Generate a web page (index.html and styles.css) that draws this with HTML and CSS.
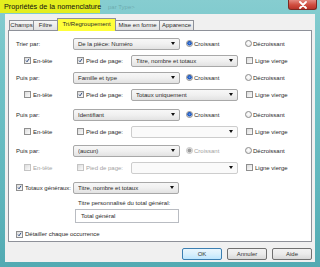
FILE: index.html
```html
<!DOCTYPE html>
<html lang="fr">
<head>
    <meta charset="UTF-8">
    <title>Propriétés de la nomenclature</title>
    <link rel="stylesheet" href="styles.css">
</head>
<body>
    <div class="window">
        <div class="titlebar">
            <span class="title">Propriétés de la nomenclature</span>
            <span class="ghost">par Type&gt;</span>
            <span class="close">
                <svg viewBox="0 0 10 8" width="10" height="8"><path d="M2 1l6 6M8 1l-6 6" stroke="#fff" stroke-width="1.8" stroke-linecap="round"/></svg>
            </span>
        </div>
        <div class="client">
            <div class="tabs">
                <span class="tab tab-champs">Champs</span>
                <span class="tab tab-filtre">Filtre</span>
                <span class="tab tab-tri active">Tri/Regroupement</span>
                <span class="tab tab-mise">Mise en forme</span>
                <span class="tab tab-app">Apparence</span>
            </div>
            <div class="panel">
                <div class="group">
                    <div class="row">
                        <span class="label">Trier par:</span>
                        <span class="select"><span class="value">De la pièce: Numéro</span><span class="arrow"></span></span>
                        <span class="radio-item first"><span class="radio on"></span>Croissant</span>
                        <span class="radio-item"><span class="radio"></span>Décroissant</span>
                    </div>
                    <div class="row sub">
                        <span class="check-item head"><span class="check on"><svg viewBox="0 0 7 7"><path d="M1.4 3.6l1.5 1.7 2.8-4.2"/></svg></span>En-tête</span>
                        <span class="check-item foot"><span class="check on"><svg viewBox="0 0 7 7"><path d="M1.4 3.6l1.5 1.7 2.8-4.2"/></svg></span>Pied de page:</span>
                        <span class="select wide"><span class="value">Titre, nombre et totaux</span><span class="arrow"></span></span>
                        <span class="check-item blank"><span class="check"></span>Ligne vierge</span>
                    </div>
                </div>
                <div class="group">
                    <div class="row">
                        <span class="label">Puis par:</span>
                        <span class="select"><span class="value">Famille et type</span><span class="arrow"></span></span>
                        <span class="radio-item first"><span class="radio on"></span>Croissant</span>
                        <span class="radio-item"><span class="radio"></span>Décroissant</span>
                    </div>
                    <div class="row sub">
                        <span class="check-item head"><span class="check"></span>En-tête</span>
                        <span class="check-item foot"><span class="check on"><svg viewBox="0 0 7 7"><path d="M1.4 3.6l1.5 1.7 2.8-4.2"/></svg></span>Pied de page:</span>
                        <span class="select wide"><span class="value">Totaux uniquement</span><span class="arrow"></span></span>
                        <span class="check-item blank"><span class="check"></span>Ligne vierge</span>
                    </div>
                </div>
                <div class="group g3">
                    <div class="row">
                        <span class="label">Puis par:</span>
                        <span class="select"><span class="value">Identifiant</span><span class="arrow"></span></span>
                        <span class="radio-item first"><span class="radio on"></span>Croissant</span>
                        <span class="radio-item"><span class="radio"></span>Décroissant</span>
                    </div>
                    <div class="row sub">
                        <span class="check-item head"><span class="check"></span>En-tête</span>
                        <span class="check-item foot"><span class="check"></span>Pied de page:</span>
                        <span class="select wide empty"><span class="value"></span><span class="arrow"></span></span>
                        <span class="check-item blank"><span class="check"></span>Ligne vierge</span>
                    </div>
                </div>
                <div class="group g4">
                    <div class="row">
                        <span class="label">Puis par:</span>
                        <span class="select"><span class="value">(aucun)</span><span class="arrow"></span></span>
                        <span class="radio-item first disabled"><span class="radio on"></span>Croissant</span>
                        <span class="radio-item"><span class="radio"></span>Décroissant</span>
                    </div>
                    <div class="row sub">
                        <span class="check-item head disabled"><span class="check"></span>En-tête</span>
                        <span class="check-item foot disabled"><span class="check"></span>Pied de page:</span>
                        <span class="select wide empty"><span class="value"></span><span class="arrow"></span></span>
                        <span class="check-item blank"><span class="check"></span>Ligne vierge</span>
                    </div>
                </div>
                <div class="row totals">
                    <span class="check-item total"><span class="check on"><svg viewBox="0 0 7 7"><path d="M1.4 3.6l1.5 1.7 2.8-4.2"/></svg></span>Totaux généraux:</span>
                    <span class="select short"><span class="value">Titre, nombre et totaux</span><span class="arrow"></span></span>
                </div>
                <div class="custom-label">Titre personnalisé du total général:</div>
                <div class="text-input">Total général</div>
                <div class="row detail">
                    <span class="check-item"><span class="check on"><svg viewBox="0 0 7 7"><path d="M1.4 3.6l1.5 1.7 2.8-4.2"/></svg></span>Détailler chaque occurrence</span>
                </div>
            </div>
            <div class="buttons">
                <span class="btn default">OK</span>
                <span class="btn">Annuler</span>
                <span class="btn">Aide</span>
            </div>
        </div>
    </div>
</body>
</html>
```

FILE: styles.css
```css
* {
    box-sizing: border-box;
}

html, body {
    margin: 0;
    padding: 0;
}

body {
    width: 320px;
    height: 267px;
    overflow: hidden;
    font-family: "Liberation Sans", Arial, sans-serif;
    font-size: 6px;
    color: #2a2a2a;
    background: #5cb2b9;
}

.window {
    height: 267px;
    display: flex;
    flex-direction: column;
    padding: 0 5px 5px;
    background: linear-gradient(180deg, #86cdd0 0%, #70c2c7 30%, #60b6bd 70%, #52aab2 100%);
}

.titlebar {
    height: 14px;
    display: flex;
    align-items: flex-start;
}

.title {
    margin-left: -5px;
    width: 100px;
    height: 13px;
    padding-left: 4px;
    background: #e4ee1e;
    font-size: 7.3px;
    line-height: 14px;
    color: #111;
    white-space: nowrap;
}

.ghost {
    margin-left: 8px;
    font-size: 6px;
    line-height: 14px;
    color: rgba(60, 100, 105, 0.35);
}

.close {
    margin-left: auto;
    margin-right: -2px;
    width: 29px;
    height: 10px;
    display: flex;
    align-items: center;
    justify-content: center;
    border: 1px solid #7b2a22;
    border-top: none;
    border-radius: 0 0 3px 3px;
    background: linear-gradient(180deg, #e48a80 0%, #cf4c3e 55%, #b8342a 100%);
}

.client {
    flex: 1;
    display: flex;
    flex-direction: column;
    padding: 6px 3px 0;
    background: #f0f0f0;
}

.tabs {
    display: flex;
    align-items: flex-end;
    height: 10px;
    margin-left: 1px;
    position: relative;
    z-index: 1;
}

.tab {
    height: 10px;
    margin-right: -1px;
    border: 1px solid #8e9199;
    border-bottom: none;
    background: linear-gradient(180deg, #f7f7f7, #e1e1e1);
    font-size: 6px;
    line-height: 9px;
    text-align: center;
    white-space: nowrap;
}

.tab.active {
    height: 13px;
    margin-bottom: -1px;
    background: #ffff3a;
    line-height: 11px;
}

.tab-champs { width: 25px; }
.tab-filtre { width: 25px; }
.tab-tri { width: 59px; }
.tab-mise { width: 45px; }
.tab-app { width: 35px; }

.panel {
    height: 212px;
    padding: 4px 0 0 7px;
    border: 1px solid #8e9199;
    background: #fff;
}

.group.g3 {
    margin-top: 3px;
}

.group.g4 {
    margin-top: 2px;
}

.row {
    display: flex;
    align-items: center;
    height: 17px;
    white-space: nowrap;
}

.row.sub {
    padding-left: 8px;
}

.label {
    width: 57px;
}

.select {
    width: 107px;
    height: 12px;
    display: flex;
    align-items: center;
    padding: 0 4px;
    border: 1px solid #a8a8a8;
    border-radius: 2px;
    background: linear-gradient(180deg, #f7f7f7 0%, #f0f0f0 50%, #e2e2e2 100%);
}

.select.short {
    width: 106px;
}

.select.empty {
    border-color: #cdcdcd;
    background: #fafafa;
}

.value {
    flex: 1;
    overflow: hidden;
}

.arrow {
    width: 0;
    height: 0;
    border-left: 2.5px solid transparent;
    border-right: 2.5px solid transparent;
    border-top: 3px solid #111;
}

.radio-item {
    display: flex;
    align-items: center;
    width: 59px;
}

.radio-item.first {
    margin-left: 6px;
}

.radio {
    width: 7px;
    height: 7px;
    margin-right: 1px;
    border: 1px solid #8d8d8d;
    border-radius: 50%;
    background: radial-gradient(circle at 50% 40%, #ffffff 0, #e4e4e4 100%);
}

.radio.on {
    background: radial-gradient(circle at 50% 45%, #6fa3ec 0, #1a55bf 1.5px, #2a63c8 2px, #e8eef8 2.6px);
}

.disabled {
    color: #a3a3a3;
}

.disabled .radio,
.disabled .check {
    border-color: #c4c4c4;
}

.disabled .radio.on {
    background: radial-gradient(circle, #9b9b9b 0, #9b9b9b 1.6px, #f3f3f3 2.4px);
}

.check-item {
    display: flex;
    align-items: center;
}

.check-item.head {
    width: 53px;
}

.check-item.foot {
    width: 54px;
}

.check-item.blank {
    margin-left: 8px;
}

.check-item.total {
    width: 57px;
}

.check {
    width: 7px;
    height: 7px;
    margin-right: 2px;
    border: 1px solid #8f8f8f;
    background: linear-gradient(135deg, #dcdcdc, #fbfbfb);
}

.check svg {
    display: block;
    width: 5px;
    height: 5px;
}

.check svg path {
    fill: none;
    stroke: #1f3f7a;
    stroke-width: 1.3;
}

.row.totals {
    margin-top: 3px;
}

.custom-label {
    margin-top: 2px;
    padding-left: 62px;
    height: 10px;
    line-height: 10px;
}

.text-input {
    margin-top: 1px;
    margin-left: 59px;
    width: 104px;
    height: 14px;
    padding-left: 5px;
    line-height: 12px;
    border: 1px solid #b9bcc2;
    background: #fff;
}

.row.detail {
    height: 12px;
    margin-top: 5px;
}

.buttons {
    display: flex;
    justify-content: flex-end;
    gap: 5px;
    margin-top: 6px;
}

.btn {
    width: 40px;
    height: 12px;
    border: 1px solid #707070;
    border-radius: 2px;
    background: linear-gradient(180deg, #f2f2f2 0%, #ebebeb 50%, #d8d8d8 100%);
    font-size: 6px;
    line-height: 10px;
    text-align: center;
    color: #333;
}

.btn.default {
    border-color: #3c7fb1;
    background: linear-gradient(180deg, #eaf6fd 0%, #d9f0fc 50%, #bee6fd 100%);
}
```
